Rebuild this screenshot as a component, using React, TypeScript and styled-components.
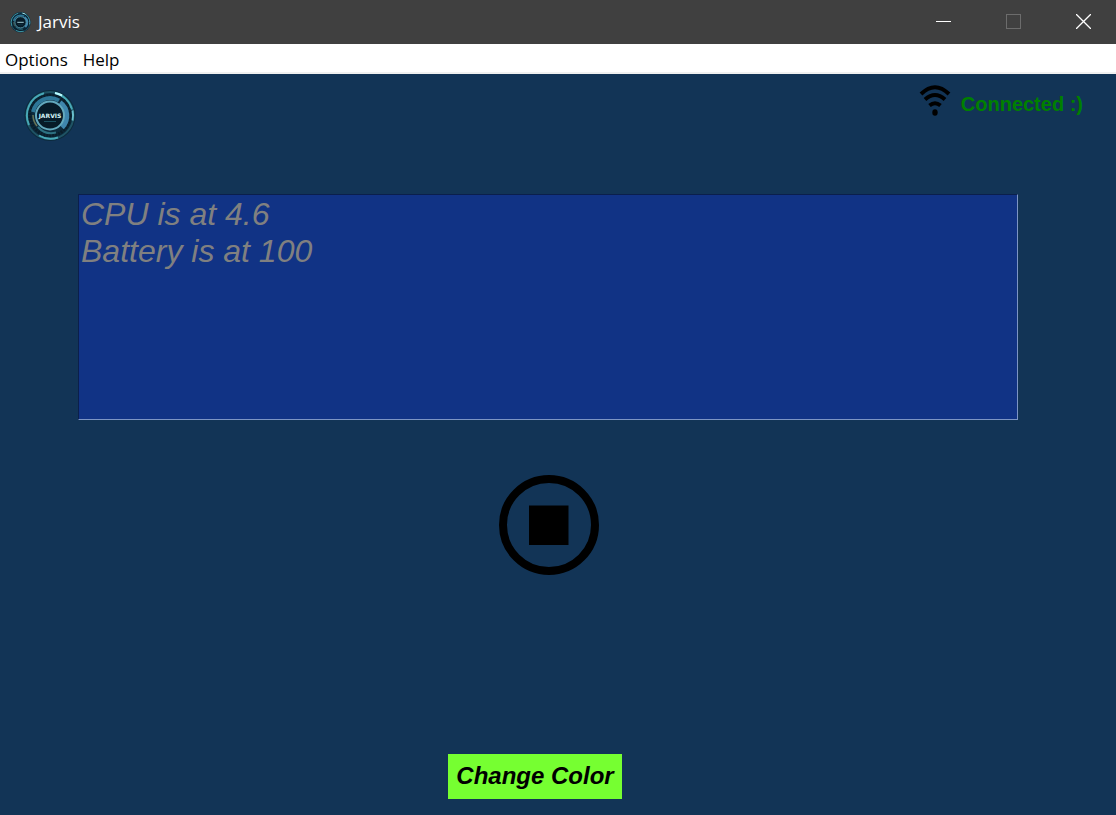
import React from "react";
import styled, { createGlobalStyle } from "styled-components";

const GlobalStyle = createGlobalStyle`
  * { box-sizing: border-box; }
  body { margin: 0; background: #123456; }
  button { border: 0; padding: 0; margin: 0; background: none; font: inherit; color: inherit; cursor: pointer; }
`;

const Window = styled.div`
  display: flex;
  flex-direction: column;
  min-height: 100vh;
  background: #123456;
  font-family: "Liberation Sans", Arial, sans-serif;
`;

const TitleBar = styled.header`
  display: flex;
  align-items: center;
  height: 44px;
  padding-left: 10px;
  background: #404040;
  color: #fff;
`;

const Title = styled.h1`
  flex: 1;
  margin: 0 0 0 7px;
  font: 400 17px/24px "Open Sans", sans-serif;
`;

const WindowControl = styled.button<{ $wide?: boolean }>`
  display: flex;
  align-items: center;
  justify-content: center;
  width: ${(p) => (p.$wide ? "74px" : "66px")};
  height: 43px;
  align-self: flex-start;
  color: #fff;
  &:disabled { color: #6c6c6c; cursor: default; }
`;

const MenuBar = styled.nav`
  display: flex;
  gap: 15px;
  height: 30px;
  padding: 0 5px;
  background: #fff;
  border-bottom: 2px solid #f0f0f0;
`;

const MenuItem = styled.button`
  && { font: 400 17px/28px "Open Sans", sans-serif; padding-top: 2px; color: #000; }
`;

const Main = styled.main`
  flex: 1;
  display: flex;
  flex-direction: column;
`;

const StatusRow = styled.div`
  display: flex;
  justify-content: space-between;
  align-items: flex-start;
  height: 120px;
  padding: 10px 33px 0 24px;
`;

const LogoSlot = styled.div`
  padding-top: 6px;
`;

const Status = styled.div`
  display: flex;
  align-items: center;
  gap: 10px;
  color: #008000;
  font-size: 20px;
  line-height: 24px;
  font-weight: 700;
`;

const StatusText = styled.span`
  padding-top: 8px;
`;

const Output = styled.textarea`
  display: block;
  height: 226px;
  margin: 0 98px 0 78px;
  padding: 1px 2px;
  border: 1px solid;
  border-color: #0b1f4c #7d95c4 #7d95c4 #0b1f4c;
  border-radius: 0;
  outline: 0;
  resize: none;
  background: #113385;
  color: #808080;
  font: italic 400 32px/37px "Liberation Sans", Arial, sans-serif;
`;

const StopButton = styled.button`
  align-self: center;
  display: flex;
  && { margin: 55px 18px 0 0; }
`;

const ColorButton = styled.button`
  align-self: center;
  && {
    margin: auto 46px 16px 0;
    height: 45px;
    padding: 0 8px 2px;
    background: #76ff31;
    color: #000;
    font: italic 700 24px/43px "Liberation Sans", Arial, sans-serif;
  }
`;

function Logo({ size, label }: { size: number; label?: boolean }) {
  return (
    <svg width={size} height={size} viewBox="0 0 52 52" fill="none" aria-hidden="true">
      <circle cx="26" cy="25.5" r="25.5" fill="#0c2a3c" />
      <circle cx="26" cy="25.5" r="23.5" stroke="#1f5364" strokeWidth="2" />
      <path d="M5 35A23 23 0 0 1 20 3.3M31 3A23 23 0 0 1 48 19.500M15 45.500A23 23 0 0 0 34 47.500" stroke="#48a9b7" strokeWidth="2" />
      <path d="M31 3A23 23 0 0 1 38 5.500" stroke="#b9fbff" strokeWidth="2" />
      <path d="M48.500 20.500A23 23 0 0 1 48.500 30.500" stroke="#6ac0cd" strokeWidth="2" />
      <circle cx="26" cy="25.5" r="20" stroke="#0a1d29" strokeWidth="3" strokeDasharray="2 1" />
      <path d="M9 22A17.500 17.500 0 0 1 35 10.500" stroke="#2d7697" strokeWidth="4" />
      <path d="M36 12.500A16.500 16.500 0 0 1 38 37.500" stroke="#3f86ad" strokeWidth="5" />
      <path d="M9 25A17 17 0 0 0 13 36" stroke="#6b7556" strokeWidth="1.5" />
      <path d="M14 37A18 18 0 0 0 32 42.500" stroke="#2d7181" strokeWidth="2" />
      <circle cx="26" cy="25.5" r="14" fill="#071b28" stroke="#63a9bd" strokeWidth="2" />
      <path d="M20 31.500h12" stroke="#1b5263" />
      {label ? (
        <text x="26" y="27.500" textAnchor="middle" fill="#d3f4f5" fontFamily="DejaVu Sans, sans-serif" fontWeight="700" fontSize="6">JARVIS</text>
      ) : (
        <path d="M18 25.500h16" stroke="#9fcbd2" strokeWidth="2.500" />
      )}
    </svg>
  );
}

function WifiIcon() {
  return (
    <svg width="32" height="32" viewBox="0 0 32 32" fill="none" stroke="#000" strokeWidth="4" aria-hidden="true">
      <path d="M2 10Q16-3.500 30 10" />
      <path d="M6 15.500Q16 6.500 26 15.500" />
      <path d="M10.500 21.500Q16 17 21.500 21.500" />
      <ellipse cx="16" cy="28.5" rx="2.700" ry="3.200" fill="#000" stroke="none" />
    </svg>
  );
}

export default function App() {
  return (
    <>
      <GlobalStyle />
      <Window>
        <TitleBar>
          <Logo size={21} />
          <Title>Jarvis</Title>
          <WindowControl aria-label="Minimize">
            <svg width="15" height="15" viewBox="0 0 15 15" shapeRendering="crispEdges"><path d="M0 7.5h15" stroke="currentColor" /></svg>
          </WindowControl>
          <WindowControl aria-label="Maximize" $wide disabled>
            <svg width="15" height="15" viewBox="0 0 15 15" fill="none" shapeRendering="crispEdges"><path d="M.5.5h14v14H.5z" stroke="currentColor" /></svg>
          </WindowControl>
          <WindowControl aria-label="Close">
            <svg width="15" height="15" viewBox="0 0 15 15"><path d="M0 0l15 15M15 0L0 15" stroke="currentColor" strokeWidth="1.3" /></svg>
          </WindowControl>
        </TitleBar>
        <MenuBar>
          <MenuItem>Options</MenuItem>
          <MenuItem>Help</MenuItem>
        </MenuBar>
        <Main>
          <StatusRow>
            <LogoSlot><Logo size={52} label /></LogoSlot>
            <Status>
              <WifiIcon />
              <StatusText>Connected :)</StatusText>
            </Status>
          </StatusRow>
          <Output aria-label="Assistant output" readOnly spellCheck={false} value={"CPU is at 4.6\nBattery is at 100"} />
          <StopButton aria-label="Stop">
            <svg width="100" height="100" viewBox="0 0 100 100">
              <circle cx="50" cy="50" r="46" fill="none" stroke="#000" strokeWidth="8" />
              <path d="M30 30.5h39.5V70H30z" />
            </svg>
          </StopButton>
          <ColorButton>Change Color</ColorButton>
        </Main>
      </Window>
    </>
  );
}
